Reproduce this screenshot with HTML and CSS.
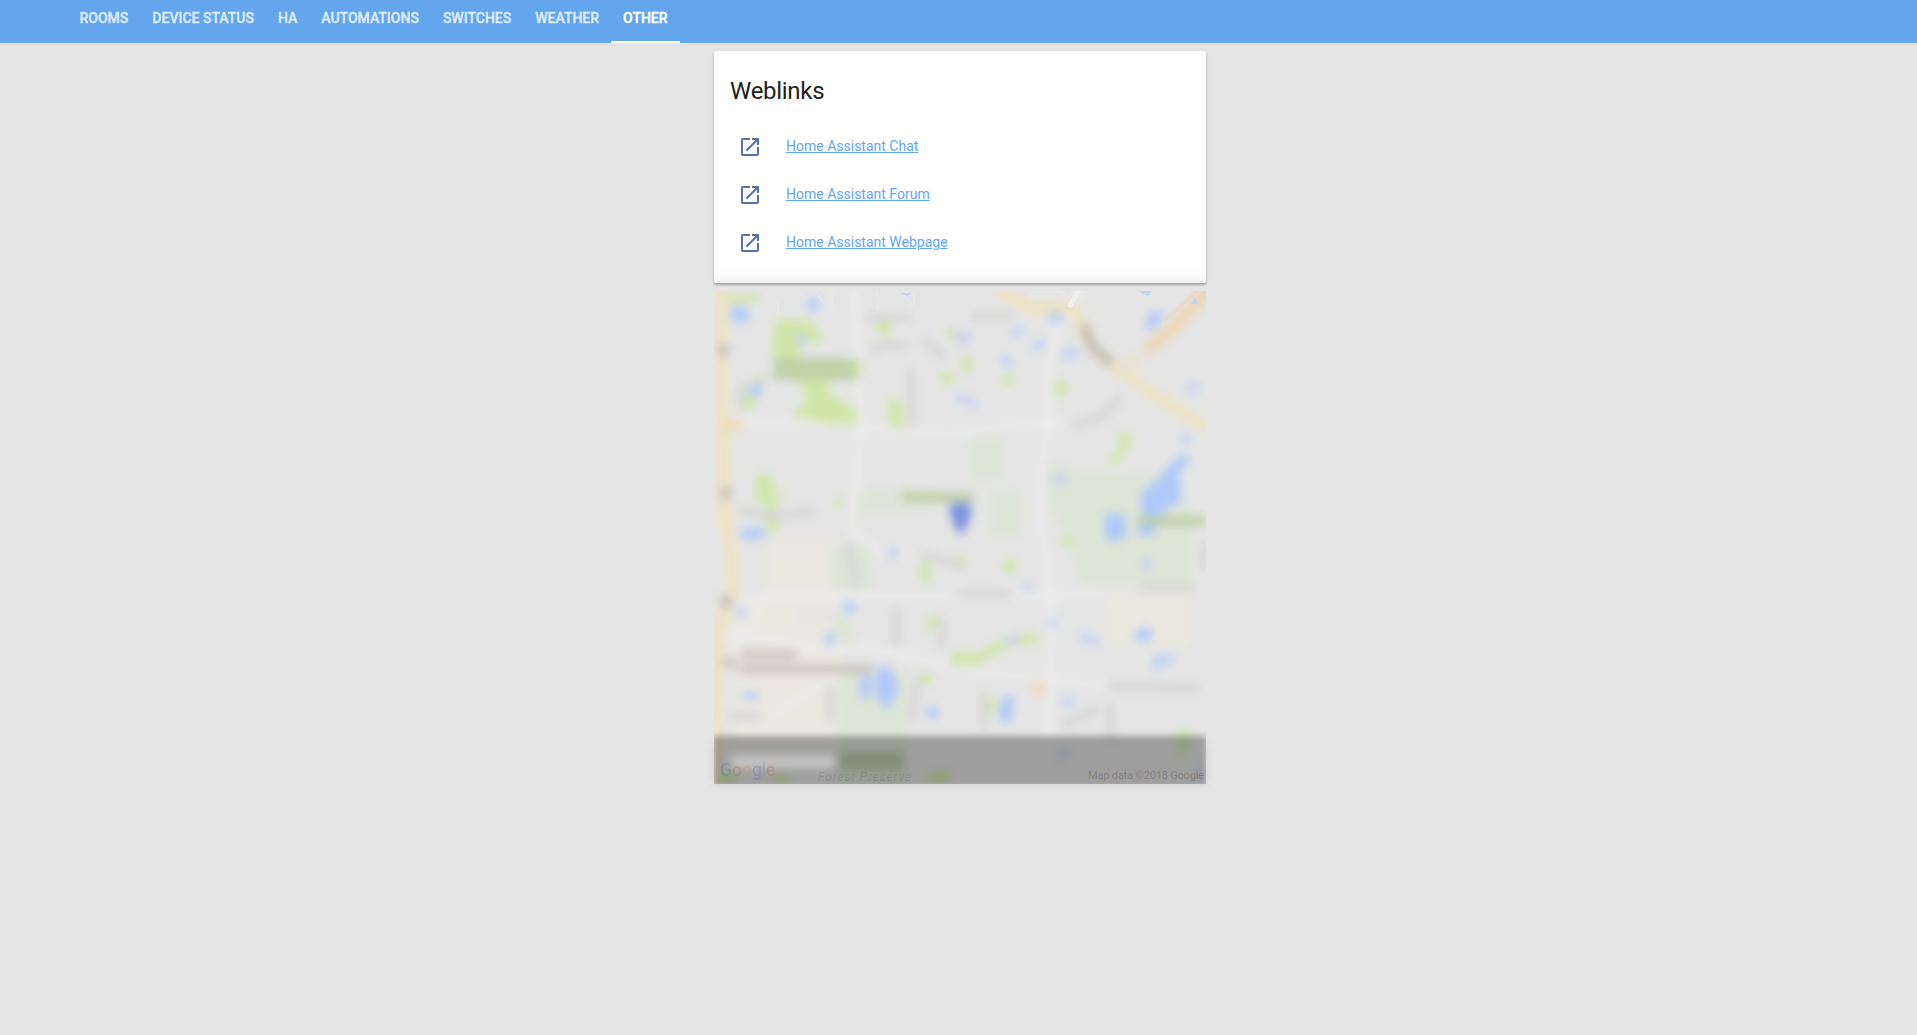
FILE: index.html
```html
<!DOCTYPE html>
<html lang="en">
<head>
<meta charset="utf-8">
<title>Home Assistant</title>
<link rel="stylesheet" href="styles.css">
</head>
<body>
<svg class="symbols" aria-hidden="true"><symbol id="open" viewBox="0 0 24 24"><path d="M14,3V5H17.59L7.76,14.83L9.17,16.24L19,6.41V10H21V3M19,19H5V5H12V3H5C3.89,3 3,3.9 3,5V19A2,2 0 0,0 5,21H19A2,2 0 0,0 21,19V12H19V19Z"/></symbol></svg>
<nav class="tabs">
<a class="tab">ROOMS</a><a class="tab">DEVICE STATUS</a><a class="tab">HA</a><a class="tab">AUTOMATIONS</a><a class="tab">SWITCHES</a><a class="tab">WEATHER</a><a class="tab active">OTHER</a>
</nav>
<main class="column">
<section class="card">
<h1 class="title">Weblinks</h1>
<div class="row"><svg class="icon"><use href="#open"/></svg><a class="link" href="#">Home Assistant Chat</a></div>
<div class="row"><svg class="icon"><use href="#open"/></svg><a class="link" href="#">Home Assistant Forum</a></div>
<div class="row"><svg class="icon"><use href="#open"/></svg><a class="link" href="#">Home Assistant Webpage</a></div>
</section>
<svg class="map" viewBox="0 0 492 493">
<defs>
<filter id="blur" color-interpolation-filters="sRGB" filterUnits="userSpaceOnUse" x="-30" y="-30" width="552" height="553"><feGaussianBlur stdDeviation="5"/></filter>
<filter id="edge" color-interpolation-filters="sRGB" filterUnits="userSpaceOnUse" x="-30" y="-30" width="552" height="553"><feGaussianBlur stdDeviation="3.4"/></filter>
<clipPath id="top"><rect x="-30" width="552" height="540"/></clipPath>
<clipPath id="tile"><rect width="492" height="493"/></clipPath>
</defs>
<g clip-path="url(#top)">
<rect class="shadow" x="2" y="455" width="488" height="37" filter="url(#blur)"/>
<g clip-path="url(#tile)">
<g filter="url(#blur)">
<rect class="ground" x="-20" y="-20" width="532" height="533"/>
<g class="sand"><path d="M52 250H126V320H84V330H128V458H22V365L2 340V313H84V302H52Z"/><path d="M393 303H475V354H393Z"/></g>
<g class="park">
<path d="M145 200 190 196 245 203 235 215 143 223ZM256 148H290V188H256ZM276 200H308V245H276ZM332 172 376 180 455 184 478 220 480 293 365 293 355 250 336 220ZM117 255H155L160 298H117ZM123 380H193L192 498H126ZM119 322H135L143 357H124Z"/>
</g>
<g class="roads">
<path d="M140-5 146 100 144 190 137 240 165 260 200 265"/><path d="M-5 130 140 134 190 142 240 144 300 133 360 132" /><path d="M372-5 345 30 336 70 334 132 326 190 328 242 335 285 337 350 335 450"/><path d="M10 307 150 305 240 306 393 303"/><path d="M5 340 80 356 150 357 200 367 270 382 340 388 400 397"/>
<path class="fine" d="M45 307 42 330 16 355M126 380 55 427 20 405"/>
</g>
<g class="leaf">
<path d="M12 3H46V10L18 14ZM61 29H96L109 47 106 52H86V70L100 76 150 69 146 86H117L114 101 142 119V133H118L80 126 82 117 93 114 88 95 64 80 59 66ZM163 31 176 29V44L163 43ZM44 83 52 85 38 116 30 120 25 117ZM42 182 58 184 61 208 80 190 61 214 66 240H52V214L42 209ZM173 107 188 112 190 138 177 136ZM226 82H240V92H226ZM288 84H300V94H288ZM341 90H353V104H341ZM248 66H258V81H248ZM232 38H244V47H232ZM401 145 416 142 418 151 404 171 395 173V167L407 156ZM206 272 215 270 217 290 205 289ZM213 326 225 326 220 337 211 341ZM238 361 260 363 304 342 324 343V352L298 354 264 373 238 375ZM289 269 304 270 301 281 289 280ZM346 247H358V255H346ZM464 438 476 440 474 462 463 462ZM207 382 218 384 215 394 207 393ZM272 414 282 405 283 420 274 422ZM120 208H129V214H120ZM240 266H252V275H240ZM212 484 236 479 234 491 212 491ZM4 480H22V492H4ZM58 484H74V492H58Z"/>
</g>
<g class="water">
<path d="M17 18 31 15 36 28 25 33 16 26ZM94 9 104 7 104 18 94 21ZM38 95 49 88 47 103 36 108ZM25 239 49 236 51 247 29 248ZM335 20 348 22V31H336ZM436 21 451 20 441 39 431 38ZM466 164 475 165 475 171 463 183 467 193 467 212 459 213 445 228 441 244 422 244 428 226 427 201 440 192 450 180ZM391 223H412V247L396 251 390 243ZM127 312 142 312 143 320 132 321ZM112 343 122 342 118 354 110 354ZM148 382 158 387 157 408 145 406ZM163 376 177 376 185 397 175 419 165 410 161 392ZM288 407 299 403 299 421 295 433 284 427ZM420 344 432 334 440 344 435 350 421 350ZM213 416H224V427H213Z"/>
<path class="pale" d="M82 42 93 45 92 53 83 53ZM297 38 310 35 311 43 298 48ZM316 53 330 47 331 58 319 60ZM347 61 363 56 365 67 347 68ZM285 64 296 65 300 79 288 74ZM240 103 256 105 266 116 259 118 252 112 242 111ZM472 93 487 91 485 100 473 103ZM466 143H476V152H466ZM340 183H351V194H340ZM364 342 377 344 388 350 386 355 366 350ZM440 364 461 363 457 375 447 376 438 385ZM347 407H361V415H347ZM308 293H320V300H308ZM335 328H343V336H335ZM428 267H437V279H428ZM343 460H355V468H343ZM28 400 45 401 45 410 28 410ZM173 257 184 257V267H173ZM22 317H32V326H22ZM242 42 258 39 255 54 242 54ZM292 346 306 344 305 353 291 353ZM486 475H492V491H486Z"/>
</g>
<g class="highways"><path d="M7-10 8 130 12 230 18 270 20 300 10 320 2 345 0 500"/><path d="M280-5 318 18 356 15 373 42"/><path d="M396 72 423 92 492 137"/><path class="orange" d="M503-10 462 34 434 58"/><path class="faint" d="M434 58 404 82"/><path class="node" d="M8 134H28M318 397H332"/></g>
<path class="route" d="M370 34 378 56 398 73"/>
<g class="labels"><path d="M60 72H140M58 84H143"/><path d="M188 206H260M424 230H492"/><path class="dim" d="M126 470H190"/></g>
<g class="captions"><path d="M152 26H197M257 25H299M157 59 173 54 194 55M210 48 231 67M197 78V135M25 218 45 224 68 225 102 220M357 135 388 126 408 104M208 263 250 276M243 303H297M425 297H480M393 395 487 397M183 317 182 355M227 325 228 357M116 397V430M203 387 198 430M15 425H48M490 250V279M134 250 142 295M270 400V439M348 434 385 417M396 412V450M30 90 25 115M239 38 250 55"/><path class="shields" d="M4 59H15M6 202H17M6 311H18"/></g>
<g class="places"><path d="M27 364H83M25 378H158M9 372H22"/></g>
<path class="pin" d="M236 216Q247 209 257 216 256 230 247 243 238 230 236 216Z"/>
</g>
</g>
<g class="sharp"><path class="whites" d="M64 8V24M102 0 111 14M118 0V20M138 0V20M163 0V18M182 0 200 14V0M316 1H350V6H316ZM345 0 358 8"/><path class="shine" d="M365-1 361 6 355 16"/><path class="sky" d="M424 0 434 5 438 0ZM477 13 481 6 484 13ZM186 2 193 5 198 2Z"/><path class="amber" d="M484-1 450 30"/></g>
<g filter="url(#edge)" clip-path="url(#tile)"><rect class="footer" x="-1" y="445" width="494" height="52"/></g>
<rect class="caption" x="16" y="465" width="105" height="12" filter="url(#blur)"/>
<text class="google" x="6" y="485"><tspan class="g1">G</tspan><tspan class="g2">o</tspan><tspan class="g3">o</tspan><tspan class="g1">g</tspan><tspan class="g4">l</tspan><tspan class="g2">e</tspan></text>
<text class="preserve" x="104" y="490" textLength="93">Forest Preserve</text>
<text class="credit" x="374" y="488" textLength="116">Map data ©2018 Google</text>
</g>
</svg>
</main>
</body>
</html>
```
FILE: styles.css
```css
* { box-sizing: border-box; }
body { margin: 0; min-height: 100vh; background: #e5e5e5; font-family: Roboto, sans-serif; overflow: hidden; }
.symbols { display: none; }
.tabs { display: flex; height: 43px; padding-left: 67.5px; background: #63a6ee; }
.tab { padding: 10px 12px 0; font-size: 14px; line-height: 16px; font-weight: 500; color: rgba(255,255,255,.77); -webkit-text-stroke: .3px; border-bottom: 2px solid transparent; white-space: nowrap; }
.tab.active { color: #fff; border-color: #fff; }
.column { width: 492px; margin: 8px 0 0 714px; display: flex; flex-direction: column; gap: 8px; }
.card { height: 232px; padding: 24px 16px 0; border-radius: 2px; background: linear-gradient(#fff 0, #fff 212px, #fbfbfb 224px, #f4f4f4 232px); box-shadow: 0 2px 2px rgba(0,0,0,.22), 0 1px 4px rgba(0,0,0,.12); }
.title { margin: 0 0 16px; height: 32px; font-size: 24px; line-height: 32px; font-weight: 400; letter-spacing: -.012em; color: #212121; }
.row { display: flex; align-items: center; height: 48px; padding-left: 8px; gap: 24px; }
.icon { width: 24px; height: 24px; fill: #5474a4; flex: none; }
.link { margin-bottom: 2px; font-size: 14px; line-height: 20px; color: #63a6ee; text-decoration: underline; }
.map { display: block; width: 492px; height: 493px; overflow: visible; }
.ground { fill: #e5e5e5; }
.shadow { fill: #c4c4c4; }
.sand { fill: #ebe8e0; }
.park { fill: #dde5d6; }
.leaf { fill: #d0e6a8; }
.water { fill: #b0c9fa; }
.water .pale { fill: #c3d3f3; }
.roads { fill: none; stroke: #ebebeb; stroke-width: 8px; }
.roads .fine { stroke-width: 4px; }
.highways { fill: none; stroke: #ede2c2; stroke-width: 12px; }
.highways .orange { stroke: #ecd5b2; }
.highways .faint { stroke: #e9e2d3; }
.highways .node { stroke: #f0dcbc; stroke-width: 12px; }
.route { fill: none; stroke: #c8bfae; stroke-width: 10px; }
.labels { fill: none; stroke: #bccda7; stroke-width: 9px; }
.labels .dim { stroke: #bdcbac; stroke-width: 16px; }
.captions { fill: none; stroke: #d6d6d6; stroke-width: 8px; }
.captions .shields { stroke: #c4c1bb; stroke-width: 11px; }
.places { fill: none; stroke: #cbc4bf; stroke-width: 9px; }
.pin { fill: #7c92df; stroke: #7c92df; stroke-width: 2px; }
.sharp { fill: none; }
.whites { stroke: #ebebeb; stroke-width: 1px; }
.shine { stroke: #f1f1f1; stroke-width: 5px; }
.sky { fill: #c2d3f3; }
.amber { stroke: #e9cfa4; stroke-width: 4px; opacity: .3; }
.footer { fill: rgba(0,0,0,.31); }
.caption { fill: rgba(255,255,255,.42); }
.google { font: 17.5px Roboto, sans-serif; opacity: .35; }
.g1 { fill: #4775bd; }
.g2 { fill: #b96254; }
.g3 { fill: #b49a50; }
.g4 { fill: #65996a; }
.preserve { font: italic 12px Roboto, sans-serif; fill: rgba(70,85,60,.2); }
.credit { font: 11px Roboto, sans-serif; fill: rgba(30,30,30,.25); }
```
